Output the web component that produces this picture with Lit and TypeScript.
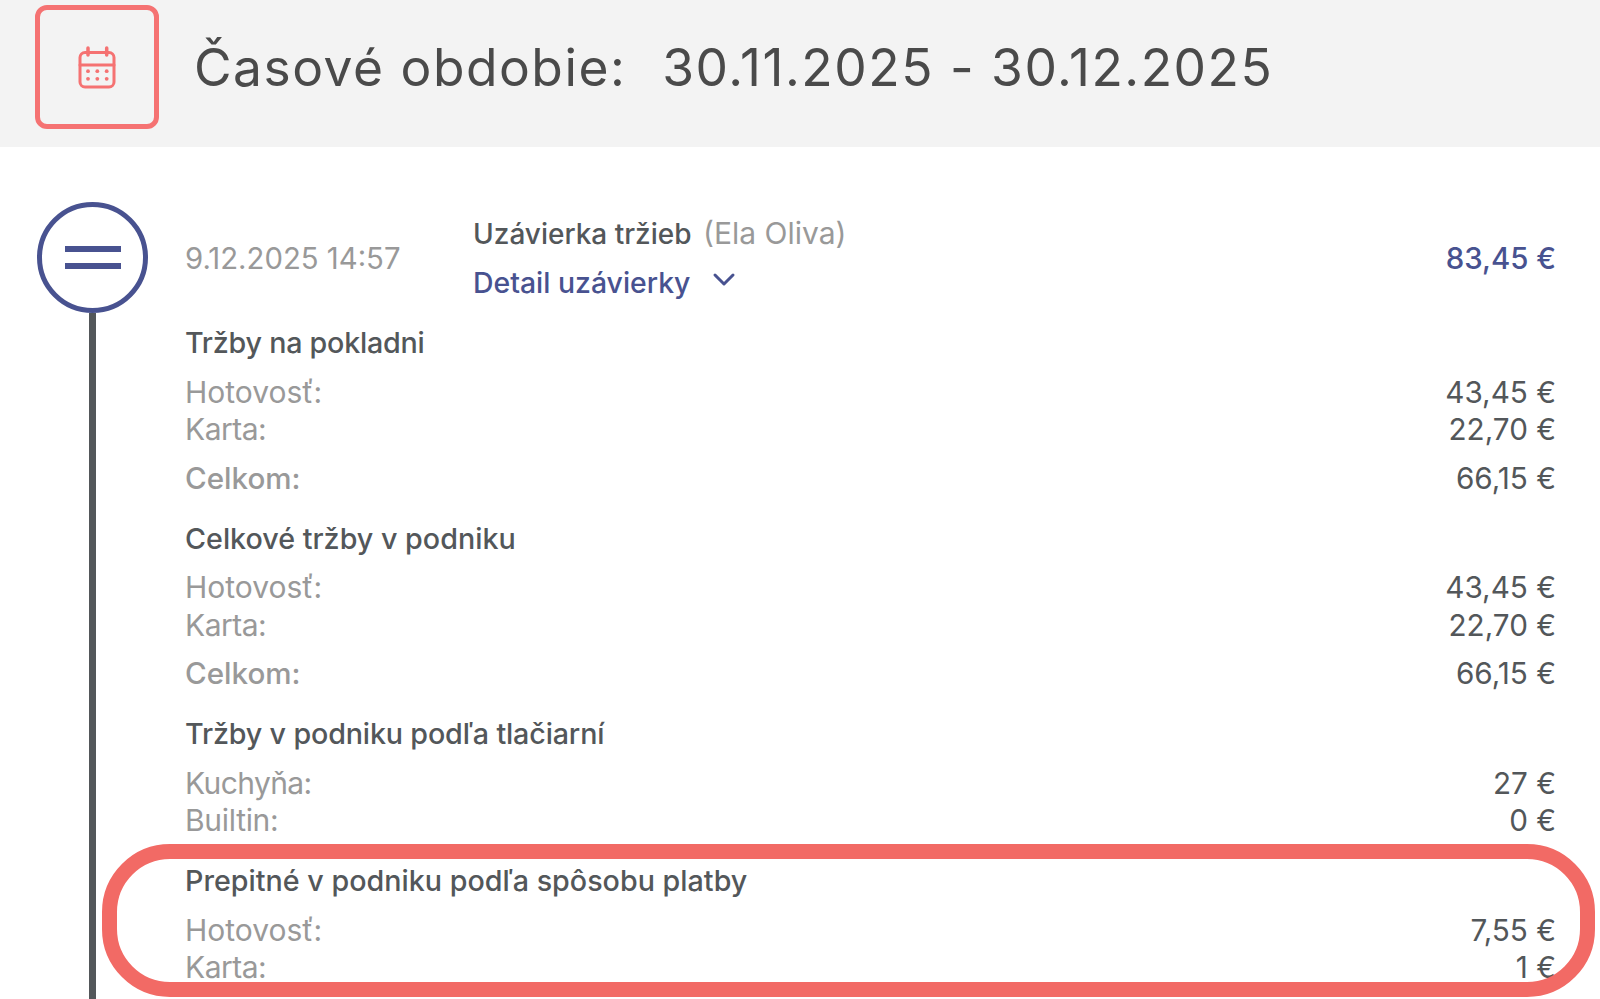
import { LitElement, html, css } from "lit";
import { customElement } from "lit/decorators.js";

type Row = { label: string; value: string; total?: boolean; track?: number };
type Section = { title: string; rows: Row[]; track?: number };

const SECTIONS: Section[] = [
  { title: "Tržby na pokladni", track: -0.24, rows: [
    { label: "Hotovosť:", value: "43,45 €" },
    { label: "Karta:", value: "22,70 €", track: -0.5 },
    { label: "Celkom:", value: "66,15 €", total: true },
  ]},
  { title: "Celkové tržby v podniku", rows: [
    { label: "Hotovosť:", value: "43,45 €" },
    { label: "Karta:", value: "22,70 €", track: -0.5 },
    { label: "Celkom:", value: "66,15 €", total: true },
  ]},
  { title: "Tržby v podniku podľa tlačiarní", track: -0.16, rows: [
    { label: "Kuchyňa:", value: "27 €", track: -0.6 },
    { label: "Builtin:", value: "0 €", track: -0.3 },
  ]},
  { title: "Prepitné v podniku podľa spôsobu platby", rows: [
    { label: "Hotovosť:", value: "7,55 €" },
    { label: "Karta:", value: "1 €", track: -0.5 },
  ]},
];

@customElement("app-root")
export class AppRoot extends LitElement {
  static styles = css`
    :host {
      display: block;
      position: relative;
      width: 1600px;
      height: 999px;
      overflow: hidden;
      background: #fff;
      font-family: "Inter", "Liberation Sans", sans-serif;
      color: #53575a;
      font-size: 28px;
    }
    .header {
      height: 147px;
      box-sizing: border-box;
      background: #f3f3f3;
      display: flex;
      align-items: flex-start;
      padding: 5px 0 0 35px;
      gap: 35px;
    }
    .cal {
      width: 124px;
      height: 124px;
      box-sizing: border-box;
      border: 5px solid #f57272;
      border-radius: 12px;
      display: flex;
      align-items: center;
      justify-content: center;
    }
    .title {
      font-size: 51.5px;
      line-height: 125px;
      letter-spacing: 1.5px;
      color: #4a4a4a;
      white-space: pre;
    }
    .title span { margin-left: 4px; }
    .timeline {
      height: 852px;
      box-sizing: border-box;
      display: flex;
      padding: 55px 44px 0 37px;
      gap: 37px;
    }
    .rail {
      width: 111px;
      flex: none;
      display: flex;
      flex-direction: column;
      align-items: center;
    }
    .circle {
      width: 111px;
      height: 111px;
      flex: none;
      box-sizing: border-box;
      border: 5px solid #485290;
      border-radius: 50%;
      display: flex;
      flex-direction: column;
      align-items: center;
      justify-content: center;
      gap: 11px;
    }
    .circle i {
      display: block;
      width: 56px;
      height: 6px;
      background: #485290;
    }
    .line {
      width: 7px;
      flex: 1;
      background: #53575a;
    }
    .content { flex: 1; min-width: 0; }
    .top {
      display: flex;
      align-items: center;
      height: 112px;
      margin-bottom: 10px;
    }
    .date { width: 288px; color: #999; flex: none; font-size: 29.3px; }
    .main { flex: 1; }
    .head { line-height: 49px; font-weight: 500; }
    .who { font-weight: 400; color: #999; margin-left: 4px; font-size: 30px; }
    .link { line-height: 49px; margin: -1px 0 1px; color: #485290; font-weight: 500; font-size: 28.4px; display: flex; align-items: center; gap: 22px; }
    .link svg { margin-top: -5px; }
    .amount { color: #485290; font-weight: 500; font-size: 29.4px; }
    .section { margin-bottom: 22.5px; }
    .stitle { line-height: 38px; font-weight: 500; font-size: 28.7px; margin-bottom: 11.5px; }
    .row { display: flex; justify-content: space-between; line-height: 37.5px; font-size: 29.7px; }
    .row .l { color: #999; font-size: 30px; }
    .row.total { margin-top: 11px; }
    .row.total .l { font-weight: 500; font-size: 29.6px; }
    .oval {
      position: absolute;
      left: 102px;
      top: 844px;
      width: 1493px;
      height: 153px;
      box-sizing: border-box;
      border: 15px solid #f26a65;
      border-radius: 68px;
      pointer-events: none;
    }
  `;

  render() {
    return html`
      <div class="header">
        <div class="cal">
          <svg width="40" height="44" viewBox="0 0 40 44" fill="none" stroke="#f57272" stroke-width="3" stroke-linecap="round">
            <rect x="3" y="7.5" width="34" height="34.5" rx="5" />
            <path d="M3 20H37" />
            <path d="M11 3V10M29.7 3V10" stroke-width="3.5" />
            <g fill="#f57272" stroke="none">
              <circle cx="11" cy="26.2" r="1.9" /><circle cx="20.3" cy="26.2" r="1.9" /><circle cx="29.7" cy="26.2" r="1.9" />
              <circle cx="11" cy="33.8" r="1.9" /><circle cx="20.3" cy="33.8" r="1.9" /><circle cx="29.7" cy="33.8" r="1.9" />
            </g>
          </svg>
        </div>
        <div class="title">Časové obdobie:  <span>30.11.2025 - 30.12.2025</span></div>
      </div>
      <div class="timeline">
        <div class="rail">
          <div class="circle"><i></i><i></i></div>
          <div class="line"></div>
        </div>
        <div class="content">
          <div class="top">
            <div class="date">9.12.2025 14:57</div>
            <div class="main">
              <div class="head">Uzávierka tržieb <span class="who">(Ela Oliva)</span></div>
              <div class="link">Detail uzávierky
                <svg width="24" height="16" viewBox="0 0 24 16" fill="none" stroke="#485290" stroke-width="3" stroke-linecap="round" stroke-linejoin="round"><path d="M3 3L12 12L21 3" /></svg>
              </div>
            </div>
            <div class="amount">83,45 €</div>
          </div>
          ${SECTIONS.map(s => html`
            <div class="section">
              <div class="stitle" style="letter-spacing:${s.track ?? 0}px">${s.title}</div>
              ${s.rows.map(r => html`
                <div class="row ${r.total ? "total" : ""}"><span class="l" style="letter-spacing:${r.track ?? 0}px">${r.label}</span><span>${r.value}</span></div>
              `)}
            </div>
          `)}
        </div>
      </div>
      <div class="oval"></div>
    `;
  }
}
